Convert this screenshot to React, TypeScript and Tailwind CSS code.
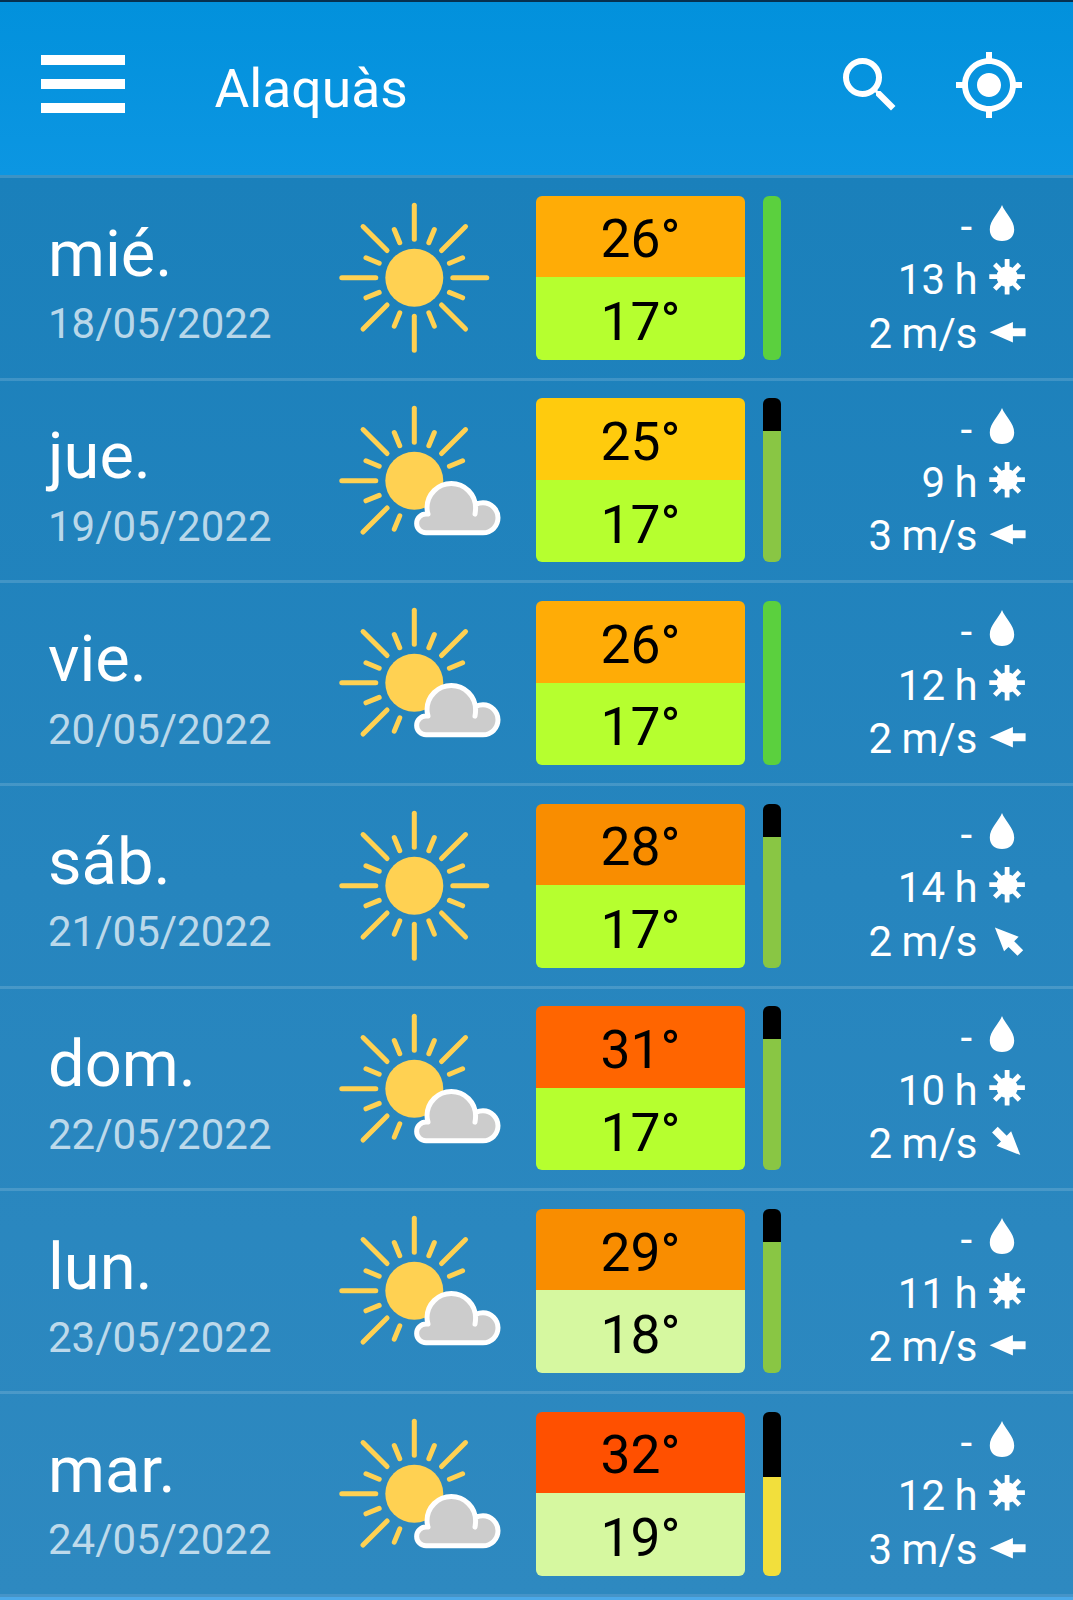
import { MdMyLocation, MdSearch } from "react-icons/md";

type Day = {
  name: string;
  date: string;
  cloudy: boolean;
  max: number;
  maxColor: string;
  min: number;
  minColor: string;
  // share of the reliability bar that is missing, in percent
  missing: number;
  barColor: string;
  sunHours: number;
  wind: number;
  windAngle: number;
};

const days: Day[] = [
  {
    name: "mié.",
    date: "18/05/2022",
    cloudy: false,
    max: 26,
    maxColor: "bg-[#ffac06]",
    min: 17,
    minColor: "bg-[#b6ff2f]",
    missing: 0,
    barColor: "bg-[#5bd03e]",
    sunHours: 13,
    wind: 2,
    windAngle: 0,
  },
  {
    name: "jue.",
    date: "19/05/2022",
    cloudy: true,
    max: 25,
    maxColor: "bg-[#ffcb0d]",
    min: 17,
    minColor: "bg-[#b6ff2f]",
    missing: 20,
    barColor: "bg-[#89c644]",
    sunHours: 9,
    wind: 3,
    windAngle: 0,
  },
  {
    name: "vie.",
    date: "20/05/2022",
    cloudy: true,
    max: 26,
    maxColor: "bg-[#ffac06]",
    min: 17,
    minColor: "bg-[#b6ff2f]",
    missing: 0,
    barColor: "bg-[#5bd03e]",
    sunHours: 12,
    wind: 2,
    windAngle: 0,
  },
  {
    name: "sáb.",
    date: "21/05/2022",
    cloudy: false,
    max: 28,
    maxColor: "bg-[#f98d00]",
    min: 17,
    minColor: "bg-[#b6ff2f]",
    missing: 20,
    barColor: "bg-[#89c644]",
    sunHours: 14,
    wind: 2,
    windAngle: 45,
  },
  {
    name: "dom.",
    date: "22/05/2022",
    cloudy: true,
    max: 31,
    maxColor: "bg-[#ff6500]",
    min: 17,
    minColor: "bg-[#b6ff2f]",
    missing: 20,
    barColor: "bg-[#89c644]",
    sunHours: 10,
    wind: 2,
    windAngle: 225,
  },
  {
    name: "lun.",
    date: "23/05/2022",
    cloudy: true,
    max: 29,
    maxColor: "bg-[#f98d00]",
    min: 18,
    minColor: "bg-[#d6f8a0]",
    missing: 20,
    barColor: "bg-[#89c644]",
    sunHours: 11,
    wind: 2,
    windAngle: 0,
  },
  {
    name: "mar.",
    date: "24/05/2022",
    cloudy: true,
    max: 32,
    maxColor: "bg-[#ff5000]",
    min: 19,
    minColor: "bg-[#d6f8a0]",
    missing: 40,
    barColor: "bg-[#f2df3c]",
    sunHours: 12,
    wind: 3,
    windAngle: 0,
  },
];

const WeatherIcon = ({ cloudy }: { cloudy: boolean }) => {
  const rays = Array.from({ length: 16 }, (_, i) => i).filter(
    // the cloud takes the place of the rays from east to south
    (i) => !cloudy || i > 4
  );

  return (
    <svg viewBox="0 0 170 160" className="h-[160px] w-[170px] shrink-0">
      <g transform="translate(79.3 79.8)">
        <circle r="29" fill="#ffd152" />
        <g stroke="#ffd152" strokeWidth="5" strokeLinecap="round">
          {rays.map((i) => (
            <line
              key={i}
              x1={i % 2 ? 38 : 38.5}
              x2={i % 2 ? 52.3 : 72.5}
              transform={`rotate(${i * 22.5})`}
            />
          ))}
        </g>
        {cloudy && (
          <path
            d="M60.7 33.3Q61.3 30 61.3 27A24.3 24.3 0 0 0 12.7 27Q12.7 30 13.7 33.3H11.7A9.3 9.3 0 0 0 11.7 52H68.7A15 15 0 0 0 68.7 22Q65 22 62 23.3"
            fill="#ccc"
            stroke="#fff"
            strokeWidth="5"
            strokeLinecap="round"
            strokeLinejoin="round"
          />
        )}
      </g>
    </svg>
  );
};

const DropIcon = () => (
  <svg viewBox="0 0 38 53" className="h-[53px] w-[38px]" fill="#fff">
    <path d="M13 5C16 13 25.2 20 25.2 29.5C25.2 36.5 20.5 41 13 41S.8 36.5 .8 29.5C.8 20 10 13 13 5Z" />
  </svg>
);

const SunIcon = () => (
  <svg viewBox="0 0 38 53" className="h-[53px] w-[38px]">
    <g transform="translate(18.1 23.7)">
      <circle r="10.5" fill="#fff" />
      <path
        d="M0-17.8V17.8M-17.8 0H17.8M-12.4-12.4L12.4 12.4M-12.4 12.4L12.4-12.4"
        stroke="#fff"
        strokeWidth="4.8"
      />
    </g>
  </svg>
);

const WindIcon = ({ angle }: { angle: number }) => (
  <svg viewBox="0 0 38 53" className="h-[53px] w-[38px]" fill="#fff">
    <g transform={`translate(18.6 25.3) rotate(${angle})`}>
      <path d="M-18 0L5.3-10.3V-4H18V4H5.3V10.3Z" />
    </g>
  </svg>
);

const DayRow = ({ day }: { day: Day }) => (
  <div className="flex h-[202.67px] items-start border-t-[3px] border-white/15 bg-clip-padding pl-12 pr-[46px]">
    <div className="w-[287px] pt-[38.7px]">
      <div className="text-[65px] leading-[74px] text-white">{day.name}</div>
      <div className="mt-[8.6px] text-[42px] leading-[50px] text-white/70">
        {day.date}
      </div>
    </div>
    <div className="pt-5">
      <WeatherIcon cloudy={day.cloudy} />
    </div>
    <div className="ml-[31px] mt-[17.8px] h-[164px] w-[209px] overflow-hidden rounded-md text-center text-[53.3px] leading-[82px] text-black">
      <div className={`h-[81.4px] pt-[2.6px] ${day.maxColor}`}>{day.max}°</div>
      <div className={`h-[82.6px] pt-[3.8px] ${day.minColor}`}>{day.min}°</div>
    </div>
    <div className="ml-[18px] mt-[17.8px] flex h-[164px] w-[18px] flex-col overflow-hidden rounded-md">
      <div className="bg-black" style={{ height: `${day.missing}%` }} />
      <div className={`flex-1 ${day.barColor}`} />
    </div>
    <div className="flex-1 pt-[22px] text-[42px] leading-[53.4px] text-white [word-spacing:-1px]">
      <div className="flex h-[53.4px] justify-end gap-[17px]">
        <span>-</span>
        <DropIcon />
      </div>
      <div className="flex h-[53.4px] justify-end gap-[11.4px]">
        <span>{day.sunHours} h</span>
        <SunIcon />
      </div>
      <div className="flex h-[53.4px] justify-end gap-[11.6px]">
        <span>{day.wind} m/s</span>
        <WindIcon angle={day.windAngle} />
      </div>
    </div>
  </div>
);

const App = () => {
  return (
    <div className="flex h-[1600px] w-[1073px] flex-col overflow-hidden bg-[#4ba9e9] font-[Roboto,sans-serif]">
      <header className="flex h-[175px] shrink-0 items-center border-t-2 border-[#06304f] bg-linear-to-b from-[#0291dc] to-[#0c96e2] pl-[41px] pr-12 text-white">
        <div className="mb-[9px] flex w-[84px] flex-col gap-[14px]">
          <div className="h-[10px] bg-white" />
          <div className="h-[10px] bg-white" />
          <div className="h-[10px] bg-white" />
        </div>
        <h1 className="ml-[89.5px] flex-1 text-[53.4px] leading-none">
          Alaquàs
        </h1>
        <div className="mb-[7px] flex items-center gap-[47px]">
          <MdSearch className="size-[72px]" />
          <MdMyLocation className="size-[72px]" />
        </div>
      </header>
      <main className="shrink-0 border-b-[3px] border-[#4694c8] bg-linear-to-b from-[#1a80bb] via-[#2685be] to-[#2e89c0]">
        {days.map((day) => (
          <DayRow key={day.date} day={day} />
        ))}
      </main>
    </div>
  );
};

export default App;
